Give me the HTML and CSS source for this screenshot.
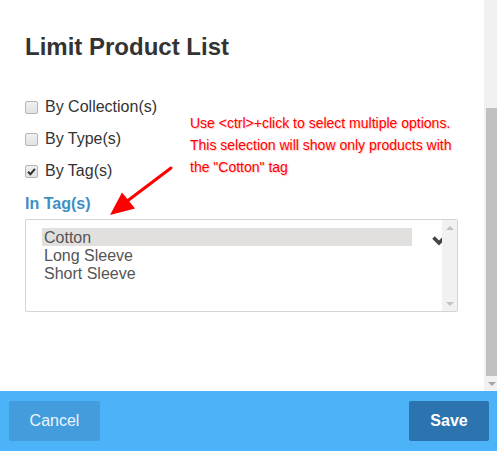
FILE: index.html
```html
<!DOCTYPE html>
<html>
<head>
<meta charset="utf-8">
<title>Limit Product List</title>
<link rel="stylesheet" href="styles.css">
</head>
<body>
<div class="app">
  <div class="main">
    <div class="content">
      <h1 class="title">Limit Product List</h1>
      <ul class="filters">
        <li class="filter"><span class="cb"></span><span>By Collection(s)</span></li>
        <li class="filter"><span class="cb"></span><span>By Type(s)</span></li>
        <li class="filter"><span class="cb cb-checked"><svg viewBox="0 0 13 13" width="13" height="13"><path d="M3 6.8 L5.4 9.2 L10 3.8" fill="none" stroke="#333" stroke-width="2"/></svg></span><span>By Tag(s)</span></li>
      </ul>
      <h2 class="field-label">In Tag(s)</h2>
      <div class="listbox">
        <ul class="options">
          <li class="opt opt-selected">Cotton</li>
          <li class="opt">Long Sleeve</li>
          <li class="opt">Short Sleeve</li>
        </ul>
        <svg class="chevron" viewBox="0 0 16 12" width="16" height="12"><polyline points="1.5,2.5 7,8 12.5,2.5" fill="none" stroke="#444" stroke-width="3.6"/></svg>
        <div class="lb-scroll">
          <span class="tri tri-up"></span>
          <span class="tri tri-down"></span>
        </div>
      </div>
      <p class="note">Use &lt;ctrl&gt;+click to select multiple options.<br>This selection will show only products with<br>the "Cotton" tag</p>
      <svg class="pointer" width="200" height="240" viewBox="0 0 200 240">
        <line x1="171" y1="168" x2="126" y2="202" stroke="#f00" stroke-width="3" stroke-linecap="round"/>
        <polygon points="110,215 122,192.5 135,208.5" fill="#f00"/>
      </svg>
    </div>
    <div class="scrollbar">
      <div class="sb-track"><div class="sb-thumb"></div></div>
      <div class="sb-btn"><span class="tri tri-down tri-dark"></span></div>
    </div>
  </div>
  <footer class="footer">
    <button class="btn btn-cancel">Cancel</button>
    <button class="btn btn-save">Save</button>
  </footer>
</div>
</body>
</html>
```
FILE: styles.css
```css
* { box-sizing: border-box; }
html, body { margin: 0; padding: 0; }
body {
  font-family: "Liberation Sans", Arial, sans-serif;
  color: #333;
  background: #fff;
  overflow: hidden;
}
.app {
  width: 497px;
  height: 451px;
  display: flex;
  flex-direction: column;
}
.main {
  flex: 1;
  display: flex;
  min-height: 0;
}
.content {
  flex: 1;
  position: relative;
  padding: 33px 26px 0 25px;
}
.title {
  margin: 0;
  font-size: 24px;
  line-height: 28px;
  font-weight: bold;
  color: #333;
}
.filters {
  list-style: none;
  margin: 30px 0 0;
  padding: 0;
}
.filter {
  height: 32px;
  line-height: 32px;
  display: flex;
  align-items: center;
  gap: 7px;
  font-size: 16px;
  color: #333;
}
.cb {
  width: 13px;
  height: 13px;
  border: 1px solid #b5b5b5;
  border-radius: 2px;
  background: linear-gradient(#f0f0f0, #e2e2e2);
  position: relative;
  flex: none;
}
.cb svg {
  position: absolute;
  left: -1px;
  top: -1px;
}
.field-label {
  margin: 7px 0 0;
  font-size: 16px;
  line-height: 20px;
  font-weight: bold;
  color: #3d8fc4;
}
.listbox {
  margin-top: 5px;
  height: 93px;
  border: 1px solid #d4d4d4;
  border-radius: 2px;
  display: flex;
  position: relative;
  background: #fff;
}
.options {
  list-style: none;
  margin: 0;
  padding: 8px 30px 0 16px;
  flex: 1;
}
.opt {
  height: 18px;
  line-height: 19px;
  font-size: 16px;
  color: #555;
  padding-left: 2px;
}
.opt-selected {
  background: #e1e0de;
}
.chevron {
  position: absolute;
  left: 406px;
  top: 15px;
}
.lb-scroll {
  width: 15px;
  background: #f1f1f1;
  position: relative;
  z-index: 1;
  display: flex;
  flex-direction: column;
  justify-content: space-between;
  align-items: center;
  padding: 6px 0 5px;
}
.tri {
  width: 0;
  height: 0;
  border-left: 4px solid transparent;
  border-right: 4px solid transparent;
}
.tri-up { border-bottom: 4px solid #c2c2c2; }
.tri-down { border-top: 4px solid #c2c2c2; }
.tri-dark { border-top-color: #a3a3a3; }
.note {
  position: absolute;
  left: 190px;
  top: 112px;
  margin: 0;
  font-size: 14px;
  line-height: 22px;
  color: #f00;
  text-shadow: 1px 1px 1px rgba(255, 0, 0, 0.25);
}
.pointer {
  position: absolute;
  left: 0;
  top: 0;
}
.scrollbar {
  width: 13px;
  background: #f1f1f1;
  display: flex;
  flex-direction: column;
}
.sb-track {
  flex: 1;
  padding: 108px 0 0 2px;
}
.sb-thumb {
  height: 268px;
  background: #c1c1c1;
}
.sb-btn {
  height: 15px;
  display: flex;
  justify-content: center;
  align-items: center;
  padding-left: 2px;
}
.footer {
  height: 60px;
  background: #4cb3f9;
  display: flex;
  justify-content: space-between;
  align-items: center;
  padding: 0 8px 0 9px;
}
.btn {
  height: 40px;
  border: none;
  border-radius: 2px;
  font-family: "Liberation Sans", Arial, sans-serif;
  font-size: 16px;
  padding: 0;
  cursor: pointer;
}
.btn-cancel {
  width: 91px;
  background: #439ddd;
  color: #eaf5ff;
}
.btn-save {
  width: 80px;
  background: #2b74b0;
  color: #fff;
  font-weight: bold;
}
```
